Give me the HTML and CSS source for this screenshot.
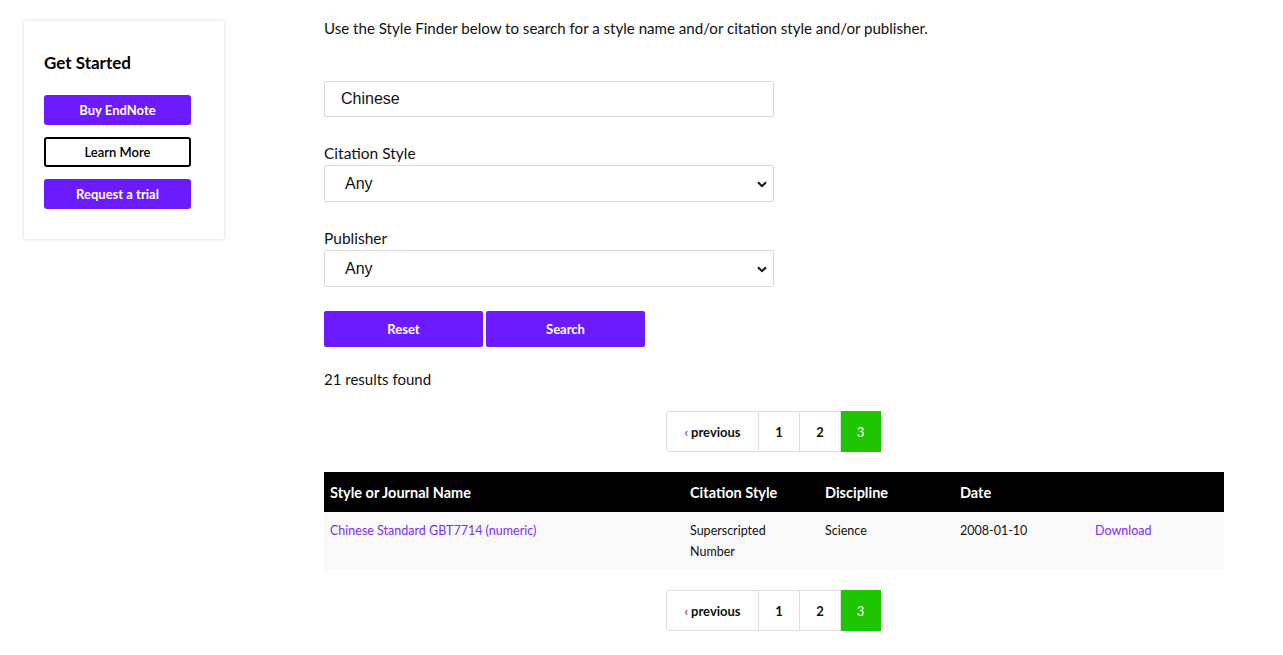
FILE: index.html
```html
<!DOCTYPE html>
<html>
<head>
<meta charset="utf-8">
<link rel="stylesheet" href="styles.css">
</head>
<body>
<div class="page">
  <aside class="sidebar">
    <div class="card">
      <h3 class="card-title">Get Started</h3>
      <a class="btn btn-purple">Buy EndNote</a>
      <a class="btn btn-outline">Learn More</a>
      <a class="btn btn-purple">Request a trial</a>
    </div>
  </aside>
  <main class="main">
    <p class="intro">Use the Style Finder below to search for a style name and/or citation style and/or publisher.</p>
    <input class="field text-field" type="text" value="Chinese">
    <label class="label">Citation Style</label>
    <div class="select-wrap">
      <div class="field select-field"><span>Any</span>
        <svg class="chev" width="10" height="7" viewBox="0 0 10 7"><path d="M1 1.2 L5 5.2 L9 1.2" fill="none" stroke="#111" stroke-width="2"/></svg>
      </div>
    </div>
    <label class="label">Publisher</label>
    <div class="select-wrap">
      <div class="field select-field"><span>Any</span>
        <svg class="chev" width="10" height="7" viewBox="0 0 10 7"><path d="M1 1.2 L5 5.2 L9 1.2" fill="none" stroke="#111" stroke-width="2"/></svg>
      </div>
    </div>
    <div class="actions">
      <a class="action">Reset</a>
      <a class="action">Search</a>
    </div>
    <p class="count">21 results found</p>
    <div class="pager">
      <a class="pg pg-prev"><span class="lsaquo">&lsaquo;</span> previous</a>
      <a class="pg">1</a>
      <a class="pg">2</a>
      <a class="pg pg-active">3</a>
    </div>
    <table class="results">
      <thead>
        <tr><th class="c-name">Style or Journal Name</th><th>Citation Style</th><th>Discipline</th><th>Date</th><th></th></tr>
      </thead>
      <tbody>
        <tr>
          <td class="c-name"><a class="link">Chinese Standard GBT7714 (numeric)</a></td>
          <td>Superscripted<br>Number</td>
          <td>Science</td>
          <td>2008-01-10</td>
          <td><a class="link">Download</a></td>
        </tr>
      </tbody>
    </table>
    <div class="pager pager-bottom">
      <a class="pg pg-prev"><span class="lsaquo">&lsaquo;</span> previous</a>
      <a class="pg">1</a>
      <a class="pg">2</a>
      <a class="pg pg-active">3</a>
    </div>
  </main>
</div>
</body>
</html>
```
FILE: styles.css
```css
* { box-sizing: border-box; }
html, body { margin: 0; padding: 0; background: #fff; }
body {
  font-family: Lato, "Liberation Sans", sans-serif;
  color: #111;
  font-size: 15px;
}
.page {
  display: flex;
  align-items: flex-start;
  padding: 21px 0 0 24px;
}
.sidebar { width: 300px; flex: none; }
.card {
  width: 200px;
  padding: 31px 33px 30px 20px;
  background: #fff;
  box-shadow: 0 0 3px rgba(0,0,0,0.18);
  display: flex;
  flex-direction: column;
}
.card-title {
  margin: 0 0 21px;
  font-size: 17px;
  font-weight: 700;
  line-height: 22px;
  color: #000;
}
.btn {
  display: flex;
  align-items: center;
  justify-content: center;
  height: 30px;
  border-radius: 3px;
  font-size: 13px;
  font-weight: 700;
  margin-bottom: 12px;
}
.btn:last-child { margin-bottom: 0; }
.btn-purple { background: #6c1bff; color: #fff; }
.btn-outline { border: 2px solid #000; color: #000; font-weight: 600; }
.main {
  width: 900px;
  flex: none;
  display: flex;
  flex-direction: column;
  align-items: flex-start;
}
.intro {
  margin: -3px 0 0;
  font-size: 15.1px;
  line-height: 20px;
  color: #111;
}
.field {
  width: 450px;
  border: 1px solid #d9d9d9;
  border-radius: 2px;
  background: #fff;
  font-family: "Liberation Sans", Arial, sans-serif;
  font-size: 16px;
  color: #111;
}
.text-field {
  margin-top: 43px;
  height: 36px;
  padding: 0 16px;
  outline: none;
}
.label {
  margin-top: 26px;
  font-size: 15.5px;
  line-height: 20px;
}
.select-wrap { margin-top: 2px; }
.select-field {
  height: 37px;
  display: flex;
  align-items: center;
  justify-content: space-between;
  padding: 0 6px 0 20px;
}
.chev { margin-top: 1px; }
.actions {
  margin-top: 24px;
  display: flex;
  gap: 3px;
}
.action {
  width: 159px;
  height: 36px;
  display: flex;
  align-items: center;
  justify-content: center;
  background: #6c1bff;
  color: #fff;
  font-size: 13px;
  font-weight: 700;
  border-radius: 2px;
}
.count {
  margin: 22px 0 0;
  font-size: 15px;
  line-height: 20px;
}
.pager {
  align-self: center;
  margin-top: 22px;
  margin-right: 1px;
  display: flex;
}
.pg {
  height: 41px;
  width: 41px;
  display: flex;
  align-items: center;
  justify-content: center;
  border: 1px solid #ddd;
  border-left: none;
  font-size: 13px;
  font-weight: 700;
  color: #111;
}
.pg-prev {
  width: 93px;
  border-left: 1px solid #ddd;
  border-radius: 3px 0 0 3px;
}
.lsaquo { color: #8a1538; margin-right: 3px; font-weight: 400; }
.pg-active {
  width: 40px;
  background: #1ec500;
  border-color: #1ec500;
  color: #fff;
  font-weight: 400;
}
.results {
  margin-top: 20px;
  width: 900px;
  border-collapse: collapse;
  table-layout: fixed;
}
.results th {
  background: #000;
  color: #fff;
  font-size: 14.5px;
  font-weight: 700;
  text-align: left;
  height: 40px;
  padding: 0 6px;
  width: 135px;
}
.results th.c-name { width: 360px; }
.results td {
  background: #f9f9f9;
  vertical-align: top;
  font-size: 12.5px;
  line-height: 21px;
  padding: 8px 6px 8px;
  color: #111;
}
.link { color: #7a2cff; }
.pager-bottom { margin-top: 20px; }
```
